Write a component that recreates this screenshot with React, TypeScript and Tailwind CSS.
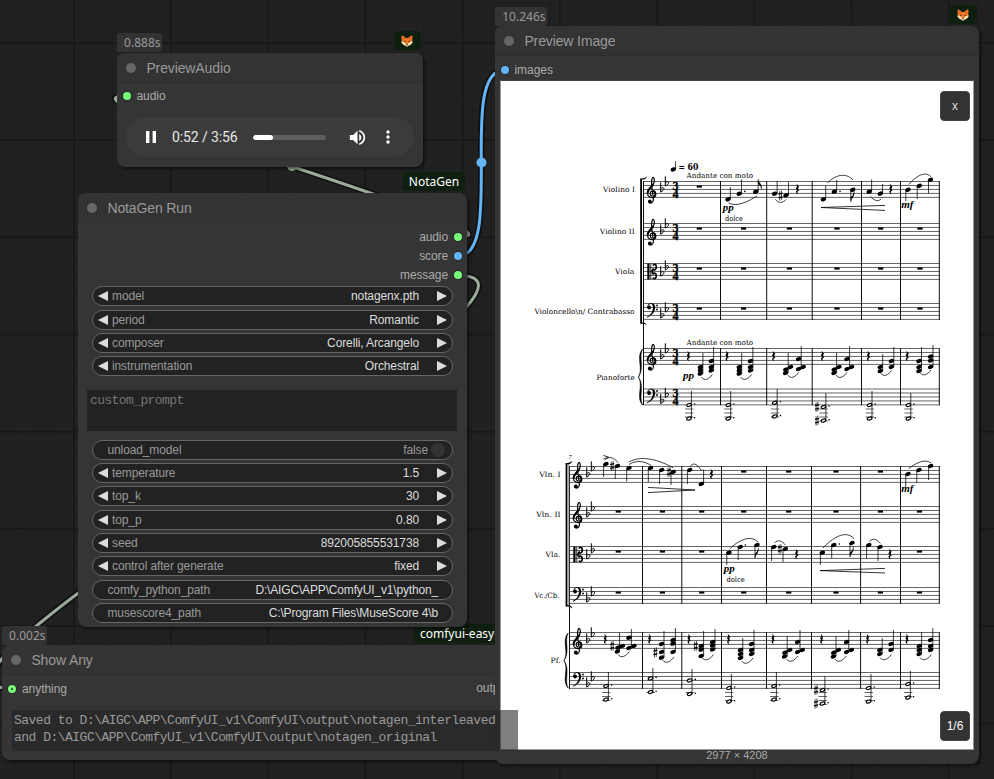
import React from "react";

const SANS = "font-['Liberation_Sans',Arial,sans-serif]";
const NOTO = "font-['Noto_Sans','Open_Sans',sans-serif]";

/* ---------- score engraving ---------- */

type Pt = [number, number];
type Chord = { h: Pt[]; s?: [number, number]; flag?: 1 | -1; dot?: Pt };

const staffLines = (x1: number, x2: number, top: number) =>
  [0, 1, 2, 3, 4].map((i) => (
    <line key={`${x1}-${top}-${i}`} x1={x1} x2={x2} y1={top + i * 3.97} y2={top + i * 3.97} stroke="#222" strokeWidth={0.7} />
  ));

const Treble = ({ x, y }: { x: number; y: number }) => (
  <g transform={`translate(${x} ${y + 12})`} fill="none" stroke="#000" strokeLinecap="round">
    <path
      strokeWidth="1.2"
      d="M4.8 2.4C2.7 1.4 3.2-2.2 5.8-2.6C9.6-2.8 10 3.4 6 4C1.4 4.4-.3.6 1.2-2.8C2.6-6 7.4-8.4 7.6-12.4C7.7-16.6 6.2-17.4 5.2-14C4-9.6 5.8-3 6.7 5C7.1 9.6 3.6 10.4 2.6 8.4"
    />
    <path strokeWidth="2" d="M.9-.6C1.2-4 4.2-6 6.2-8.6M7.6 3C9.4 1.4 9-1.4 7-2.2" />
    <circle cx="3.1" cy="8" r="1.9" fill="#000" stroke="none" />
  </g>
);

const Bass = ({ x, y }: { x: number; y: number }) => (
  <g transform={`translate(${x} ${y})`}>
    <circle cx="2.4" cy="4" r="1.9" />
    <path d="M.8 4C.4 1 2.600-.2 4.600-.2C7.600-.2 8.800 2 8.400 5C7.800 9.600 4 12.400.2 14.200L0 13.600C3.600 11.600 6 9 6.200 4.800C6.400 2 5.800.6 4.200.5C2.600.5 1.600 1.400 1.600 3Z" />
    <circle cx="10.3" cy="2" r=".9" />
    <circle cx="10.3" cy="6" r=".9" />
  </g>
);

const Alto = ({ x, y }: { x: number; y: number }) => (
  <g transform={`translate(${x + 0.6} ${y})`}>
    <rect width="2.2" height="16" />
    <rect x="3.1" width=".8" height="16" />
    <path
      fill="none"
      stroke="#000"
      strokeWidth="1.7"
      d="M5.6 2C6.4.2 9 .4 9 3.4C9 6.8 6.6 7 5.8 5.6L4.4 8L5.8 10.4C6.6 9 9 9.2 9 12.6C9 15.6 6.4 15.8 5.6 14"
    />
  </g>
);

const Flat = ({ x, y }: { x: number; y: number }) => (
  <path
    transform={`translate(${x} ${y})`}
    fill="none"
    stroke="#000"
    strokeWidth="1"
    d="M-1.4-7.200V2.600C.6 1.500 2.100.2 1.800-1.200C1.300-2.500-.4-1.800-1.400-.7"
  />
);

const Sharp = ({ x, y }: { x: number; y: number }) => (
  <g transform={`translate(${x} ${y})`} stroke="#000" fill="none">
    <path strokeWidth=".7" d="M-.9-4.4V5M.9-5V4.4" />
    <path strokeWidth="1.2" d="M-2-1.3L2-2.3M-2 2.3L2 1.3" />
  </g>
);

const QRest = ({ x, y }: { x: number; y: number }) => (
  <path
    transform={`translate(${x} ${y})`}
    d="M-1-5.6L1.6-2.2C.4-.8.6.4 2 2.2C.2 1.6-.8 2.8.8 5.4C-2 4.2-2 1.4 0 1.6L-1.6-.8C-.2-2-.2-3.6-1-5.6Z"
  />
);

const Head = ({ x, y, hollow }: { x: number; y: number; hollow?: boolean }) => (
  <ellipse
    cx={x}
    cy={y}
    rx={hollow ? 2.4 : 2.8}
    ry={hollow ? 1.4 : 2}
    transform={`rotate(-22 ${x} ${y})`}
    fill={hollow ? "#fff" : "#000"}
    stroke={hollow ? "#000" : "none"}
    strokeWidth={1.15}
  />
);

/* s = [stem x, stem end y] */
const ChordGlyph = ({ c }: { c: Chord }) => {
  const [first] = c.h;
  return (
    <g>
      {c.s && (
        <line
          x1={c.s[0]}
          x2={c.s[0]}
          y1={c.s[1] < first[1] ? Math.max(...c.h.map((p) => p[1])) : first[1]}
          y2={c.s[1]}
          stroke="#000"
          strokeWidth={0.75}
        />
      )}
      {c.h.map((p, i) => (
        <Head key={i} x={p[0]} y={p[1]} />
      ))}
      {c.flag === 1 && c.s && (
        <path d={`M${c.s[0]} ${c.s[1]}c.6 3.4 4.6 5 3.2 10.4c-.1-3.600-1.800-5.400-3.200-6Z`} stroke="#000" strokeWidth=".2" />
      )}
      {c.flag === -1 && c.s && (
        <path d={`M${c.s[0]} ${c.s[1]}c.6-3.400 4.600-5 3.200-10.400c-.1 3.600-1.800 5.400-3.200 6Z`} stroke="#000" strokeWidth=".2" />
      )}
      {c.dot && <circle cx={c.dot[0]} cy={c.dot[1]} r=".8" />}
    </g>
  );
};

/* a pair of dotted half notes below the bass staff */
const Octave = ({ x, y, top, sharp, bottom }: { x: number; y: number; top: number; sharp?: boolean; bottom: number }) => (
  <g>
    <line x1={x + 2.4} x2={x + 2.4} y1={y + 13.6} y2={top} stroke="#000" strokeWidth=".75" />
    {[4, 8, 12, 16].map((d) =>
      bottom + d <= y + 14.5 ? (
        <line key={d} x1={x - 4} x2={x + 4.4} y1={bottom + d} y2={bottom + d} stroke="#222" strokeWidth=".7" />
      ) : null
    )}
    <Head x={x} y={y} hollow />
    <Head x={x} y={y + 13.6} hollow />
    <circle cx={x + 5.6} cy={y - 1} r=".8" />
    <circle cx={x + 5.6} cy={y + 12.8} r=".8" />
    {sharp && <Sharp x={x - 6.5} y={y} />}
    {sharp && <Sharp x={x - 6.5} y={y + 13.6} />}
  </g>
);

const Slur = ({ a, b, k }: { a: Pt; b: Pt; k: number }) => {
  const dx = (b[0] - a[0]) * 0.28;
  return (
    <path
      fill="none"
      stroke="#000"
      strokeWidth=".75"
      d={`M${a[0]} ${a[1]}C${a[0] + dx} ${a[1] + k} ${b[0] - dx} ${b[1] + k} ${b[0]} ${b[1]}`}
    />
  );
};

const n = (x: number, y: number, sx: number, sy: number, extra: Partial<Chord> = {}): Chord => ({
  h: [[x, y]],
  s: [sx, sy],
  ...extra,
});
const c = (sx: number, sy: number, ...h: Pt[]): Chord => ({ h, s: [sx, sy] });

const chords: Chord[] = [
  n(673.4, 169.4, 675.6, 161),
  n(728, 199.3, 730.3, 187), n(739.3, 193.7, 741.5, 179.5, { dot: [744.8, 191.4] }), n(755.8, 191.7, 758.2, 179.5, { flag: 1 }),
  n(774.7, 193.7, 777.1, 181), n(786, 195.3, 788.5, 182),
  n(823.4, 199.3, 825.7, 186), n(834.4, 191.7, 836.7, 180, { dot: [840, 191.4] }), n(852.7, 189.8, 850.8, 201.5, { flag: -1 }),
  n(869.3, 191.7, 871.6, 179.5), n(880.4, 193.6, 882.6, 184),
  n(908, 189.8, 905.8, 201), n(919.3, 185.8, 917.2, 199), n(930.5, 179.8, 928.5, 193.5),
  c(702.9, 353, [700.4, 367], [700.4, 370.3], [700.4, 373.6]), c(713.6, 347, [711.3, 361], [711.3, 367], [711.3, 370.5]),
  c(741.7, 353, [739.3, 367], [739.3, 370.3], [739.3, 373.6]), c(752.9, 347, [750.5, 361], [750.5, 367], [750.5, 370.5]),
  c(788.2, 353, [785.8, 369.5], [790.6, 367], [785.6, 373]), c(801.2, 346, [798.6, 359], [798.6, 369], [803.2, 367]),
  c(836.6, 353, [834.2, 369.5], [839, 367], [834, 373]), c(849.6, 346, [847, 359], [847, 369], [851.6, 367]),
  c(882.7, 354, [880.3, 367], [880.3, 371]), c(893.8, 347, [891.4, 361], [891.4, 367]),
  c(921.5, 347, [919, 361], [919, 367], [919, 371]), c(933, 345, [930.6, 356.5], [930.6, 360.5], [930.6, 367]),
  n(606, 464, 603.6, 477), n(617.4, 466, 615.3, 479), n(629, 468, 626.7, 481.5),
  n(650.6, 468, 648.3, 482), n(661.7, 470, 659.5, 484), n(673.3, 472, 671, 485),
  n(689.7, 470, 687.4, 484), n(701.3, 484, 703.6, 469.5),
  n(908, 474, 905.7, 487), n(919, 470, 916.8, 483), n(930.6, 466, 928.6, 480),
  n(729, 552.7, 726.8, 565), n(740.3, 547, 738.2, 560, { dot: [745.3, 545] }), n(757, 545, 755, 558, { flag: -1 }),
  n(773.8, 547, 771.6, 561), n(785.3, 549, 783, 562),
  n(822.4, 552.7, 820.4, 565), n(833.8, 545, 831.7, 558, { dot: [839.2, 544] }), n(852, 543, 850, 557, { flag: -1 }),
  n(868.8, 545, 866.6, 558), n(880, 547, 878, 561),
  c(619.6, 633, [618, 647.5], [622.4, 646], [617.4, 651.5]), c(631.4, 629, [629, 637.7], [629, 648], [634, 646]),
  c(664, 631, [661.6, 644], [661.6, 652], [661.6, 657.6]), c(675.4, 628, [673, 640], [673, 643.6], [673, 652]),
  c(703.6, 631, [701.2, 646], [701.2, 649.6], [701.2, 656]), c(715, 629, [712.6, 642], [712.6, 645.4], [712.6, 649.5]),
  c(742.8, 638, [740.5, 650], [740.5, 654], [740.5, 658]), c(754, 630, [751.6, 644], [751.6, 650], [751.6, 654]),
  c(787.2, 636, [785, 652.6], [789.8, 650], [784.6, 656.5]), c(800, 630, [797.6, 642], [797.6, 652], [802.4, 650]),
  c(836, 636, [833.8, 652.6], [838.4, 650], [833.4, 656.5]), c(848.8, 630, [846.6, 642], [846.6, 652], [851.4, 650]),
  c(882.2, 638, [879.8, 650], [879.8, 654]), c(893.4, 630, [891, 644], [891, 650]),
  c(921.6, 632, [919.2, 646], [919.2, 650], [919.2, 654]), c(932.8, 628, [930.6, 640], [930.6, 646], [930.6, 650]),
];

const sharps: Pt[] = [[780.6, 195.5], [612.2, 466], [669, 472], [780, 549], [612.2, 646], [655.4, 652.4], [695.6, 646]];

const quarterRests: Pt[] = [
  [797.4, 189], [890.8, 189], [711.5, 474], [796.6, 554], [890, 554],
  [688.4, 356], [727, 356], [773.6, 356], [822.4, 356], [868.4, 356], [907.2, 356],
  [605.3, 639], [649.6, 639], [689, 639], [728.6, 639], [773, 639], [821.6, 639], [867.6, 639], [907, 639],
];

const octaves: [number, number, number, number, boolean?][] = [
  [689, 405, 391, 405], [728.3, 405, 391, 405], [774.8, 402.8, 389, 405], [823.5, 407, 393, 405, true], [869.6, 405, 391, 405], [908.4, 405, 393, 405],
  [606, 686, 672, 688.5], [650.5, 678.4, 668, 688.5], [689.6, 680.4, 669, 688.5], [729, 688, 674, 688.5],
  [774, 686, 672, 688.5], [822.5, 690, 676, 688.5, true], [868.6, 688, 674, 688.5], [908, 684, 671, 688.5],
];

const slurs: [Pt, Pt, number][] = [
  [[728.5, 202.8], [757, 196], 5], [[775.4, 199.4], [786, 199.4], 4], [[827.6, 183], [853, 180], -8],
  [[870.4, 196.5], [881, 199], 3.4], [[908.8, 184.4], [931, 176.8], -7],
  [[605, 460], [618, 462.5], -4.6], [[629, 464.5], [651, 465.5], -4.6], [[629, 462], [673.4, 468], -7.5],
  [[690.4, 466.4], [701.6, 471], -5.4], [[908.8, 468.6], [931, 463], -5],
  [[729.6, 549], [758, 542], -8], [[774.6, 543], [785.4, 545], -4], [[823, 548], [854, 538.6], -9.5], [[869.4, 541.5], [880.4, 543.4], -4],
  ...([[701.4, 377], [740.6, 377], [787.6, 375], [836, 375], [880.6, 373], [920, 372.5]] as Pt[]).map(
    (p): [Pt, Pt, number] => [p, [p[0] + 11, p[1] - 2.6], 4.6]
  ),
  ...([[618, 654.4], [662.6, 660], [702, 657.6], [741.6, 661], [786.4, 659], [834.8, 659], [880, 657.5], [920, 657.5]] as Pt[]).map(
    (p): [Pt, Pt, number] => [p, [p[0] + 11.4, p[1] - 3], 4.6]
  ),
];

const rests1 = [699.3, 743.6, 789.4, 837, 880.7, 920];
const rests2 = [618.3, 662.4, 701.7, 743.7, 788.7, 836, 880.4, 919.5];
const barRests: Pt[] = [
  [699.3, 185.5],
  ...[223.5, 263.5, 303.5].flatMap((y) => rests1.map((x): Pt => [x, y + 4])),
  ...rests2.slice(3, 7).map((x): Pt => [x, 470.5]),
  ...[506.5, 587.5].flatMap((y) => rests2.map((x): Pt => [x, y + 4])),
  ...[618.3, 662.4, 701.7, 919.5].map((x): Pt => [x, 550.5]),
];

const bars1 = [720.5, 766.7, 812.2, 861.5, 900.5, 939.3];
const bars2 = [642.5, 681.8, 721.5, 766.5, 811.5, 860.6, 900.5, 939.3];

const Label = ({ x, y, w, s = 7.3, children }: { x: number; y: number; w: number; s?: number; children: string }) => (
  <text x={x} y={y} textLength={w} lengthAdjust="spacingAndGlyphs" fontSize={s} className="font-['DejaVu_Serif',serif]">
    {children}
  </text>
);

const Dyn = ({ x, y, children }: { x: number; y: number; children: string }) => (
  <text x={x} y={y} textAnchor="middle" fontSize="11" className="font-['Liberation_Serif',serif] font-bold italic">
    {children}
  </text>
);

const Signature = ({ x, tops, time }: { x: number; tops: number[]; time?: boolean }) => (
  <>
    {tops.map((y, i) => {
      const kind = i === 2 ? "alto" : i === 3 || i === 5 ? "bass" : "treble";
      const off = kind === "alto" ? 10 : kind === "bass" ? 12 : 8;
      return (
        <g key={i}>
          {kind === "treble" && <Treble x={x} y={y} />}
          {kind === "alto" && <Alto x={x} y={y} />}
          {kind === "bass" && <Bass x={x} y={y} />}
          <Flat x={x + 15.4} y={y + off} />
          <Flat x={x + 20} y={y + off - 6} />
          {time &&
            ["3", "4"].map((d, k) => (
              <text
                key={d}
                x={x + 28.7}
                y={y + 8 + k * 8}
                textAnchor="middle"
                fontSize="12"
                stroke="#000"
                strokeWidth=".3"
                className="font-['Liberation_Serif',serif] font-bold"
              >
                {d}
              </text>
            ))}
        </g>
      );
    })}
  </>
);

const tops1 = [181.5, 223.5, 263.5, 303.5, 348.5, 389];
const tops2 = [466.5, 506.5, 546.5, 587.5, 632.5, 672.5];

const Score = () => (
  <svg viewBox="501 81 472 668" className="block h-[668px] w-[472px] bg-white" fill="#000">
    {tops1.map((y) => staffLines(643.2, 939.6, y))}
    {tops2.map((y) => staffLines(569.2, 939.6, y))}
    <g stroke="#000" strokeWidth=".95">
      <line x1="643.5" x2="643.5" y1="181" y2="405" />
      <line x1="569.5" x2="569.5" y1="466" y2="689" />
      {bars1.map((x) => (
        <g key={x}>
          <line x1={x} x2={x} y1="181" y2="320" />
          <line x1={x} x2={x} y1="348.2" y2="405.2" />
        </g>
      ))}
      {bars2.map((x) => (
        <g key={x}>
          <line x1={x} x2={x} y1="466" y2="603.8" />
          <line x1={x} x2={x} y1="632.2" y2="689" />
        </g>
      ))}
    </g>
    <path d="M640.2 178.4C643 178.6 645 178 647.2 176.2C646 179 644 179.6 642 179.6V322.4C644 322.4 646 323 647.2 325.2C645 323.8 643 323.6 640.2 323.8Z" />
    <rect x="567" y="464" width="2.2" height="141.500" fill="#aaa" />
    <path d="M565.6 463C568.4 463 570.6 462.4 572.6 460.4C571.4 463.6 569.6 464.2 567.1 464.4V605C569.6 605 571.4 606 572.8 608.4C570.6 606.6 568.4 606.4 565.6 606.4Z" />
    <path d="M642.6 349C635.6 356 643.6 369 638.4 377C643.6 385 635.6 398 642.6 405C638.4 397 644.8 386 638.6 377C644.8 368 638.4 357 642.6 349Z" stroke="#000" strokeWidth=".5" />
    <path d="M568.2 633C561.2 640 569.2 652 564 660.5C569.2 669 561.2 681 568.2 688C564 681 570.4 670 564.2 660.5C570.4 651 564 641 568.2 633Z" stroke="#000" strokeWidth=".5" />

    <Signature x={646.7} tops={tops1} time />
    <Signature x={572.7} tops={tops2} />

    {barRests.map(([x, y]) => (
      <rect key={`${x}-${y}`} x={x - 2.6} y={y} width="5.2" height="2.1" />
    ))}
    {quarterRests.map(([x, y]) => (
      <QRest key={`${x}-${y}`} x={x} y={y} />
    ))}
    {octaves.map(([x, y, top, bottom, sharp]) => (
      <Octave key={`${x}-${y}`} x={x} y={y} top={top} bottom={bottom} sharp={sharp} />
    ))}
    {sharps.map(([x, y]) => (
      <Sharp key={`${x}-${y}`} x={x} y={y} />
    ))}
    {chords.map((ch, i) => (
      <ChordGlyph key={i} c={ch} />
    ))}
    {slurs.map(([a, b, k], i) => (
      <Slur key={i} a={a} b={b} k={k} />
    ))}
    <path
      fill="none"
      stroke="#000"
      strokeWidth=".8"
      d="M885 205.4L821 207.5L885 210.4M648 487.4L695 490L648 492.6M885 568.4L820 570.6L885 573M603.4 455.4L608.6 457.2L603.4 459"
    />

    <text x="678.4" y="169.8" textLength="20" lengthAdjust="spacingAndGlyphs" fontSize="8.500" className="font-['DejaVu_Serif',serif] font-bold">
      = 60
    </text>
    <Label x={686.6} y={177.6} w={66.6}>Andante con moto</Label>
    <Label x={686.6} y={344.8} w={66.6}>Andante con moto</Label>
    <Label x={603} y={192.4} w={32}>Violino I</Label>
    <Label x={599.8} y={234} w={35}>Violino II</Label>
    <Label x={615} y={274} w={19.4}>Viola</Label>
    <Label x={534.4} y={314.4} w={100}>{"Violoncello\\n/ Contrabasso"}</Label>
    <Label x={596.4} y={379.8} w={38.4}>Pianoforte</Label>
    <Label x={539.2} y={476.8} w={21.4}>Vln. I</Label>
    <Label x={536.2} y={517} w={24.4}>Vln. II</Label>
    <Label x={545.6} y={557.4} w={14.8}>Vla.</Label>
    <Label x={534.4} y={597.8} w={25}>Vc./Cb.</Label>
    <Label x={550.6} y={662.6} w={10}>Pf.</Label>
    <Label x={725} y={220.8} w={18}>dolce</Label>
    <Label x={726.4} y={581.8} w={18.4}>dolce</Label>
    <text x="568.6" y="458.6" fontSize="6" className="font-['Liberation_Serif',serif] italic">7</text>
    <Dyn x={728.2} y={211}>pp</Dyn>
    <Dyn x={688.6} y={379}>pp</Dyn>
    <Dyn x={729.2} y={572}>pp</Dyn>
    <Dyn x={907.4} y={208}>mf</Dyn>
    <Dyn x={907.4} y={492}>mf</Dyn>
  </svg>
);

/* ---------- node graph ---------- */

const Fox = () => (
  <svg viewBox="0 0 24 24" className="h-3 w-3">
    <path fill="#f4792b" d="M1.5 1C5 1.5 8 4 9.5 6h5C16 4 19 1.500 22.500 1C23.500 6 22.500 10 22 13L12 23L2 13C1.500 10 .5 6 1.500 1Z" />
    <path fill="#d9571f" d="M3.500 3.500C6 5 7 6.500 7.500 7.500L4 10ZM20.500 3.500C18 5 17 6.500 16.500 7.500L20 10Z" />
    <path fill="#ffe3b0" d="M0 13C4 12 8 14.500 10 18h4C16 14.500 20 12 24 13C22 18 18 20.500 15 21.500L12 23.500L9 21.500C6 20.500 2 18 0 13Z" />
    <circle cx="8" cy="12.500" r="1.500" fill="#4a2413" />
    <circle cx="16" cy="12.500" r="1.500" fill="#4a2413" />
    <path fill="#3b2a22" d="M9.500 18.500h5L12 21.500Z" />
  </svg>
);

const TimeTag = ({ className, children }: { className: string; children: string }) => (
  <div className={`absolute flex h-[19px] items-center justify-end rounded-t-[3px] rounded-br-[3px] bg-[#333] pr-[1.500px] text-[12px] text-[#999] ${NOTO} ${className}`}>
    {children}
  </div>
);

const Badge = ({ className, children }: { className: string; children: React.ReactNode }) => (
  <div className={`absolute flex h-[19px] items-center justify-center rounded bg-[#0f1f0f] text-[12px] whitespace-nowrap text-white ${NOTO} ${className}`}>
    {children}
  </div>
);

const Node = ({ className, title, children }: { className: string; title: string; children: React.ReactNode }) => (
  <section className={`absolute flex flex-col rounded-lg bg-[#353535] shadow-[2px_2px_3px_rgba(0,0,0,0.5)] ${className}`}>
    <header className="flex h-[30px] shrink-0 items-center gap-[10px] rounded-t-lg border-b border-[#2e2e2e] bg-[#333] pl-[9.400px] text-[14px] tracking-[-0.120px] text-[#999]">
      <span className="h-[10px] w-[10px] rounded-full bg-[#666]" />
      <h2 className="pt-px">{title}</h2>
    </header>
    {children}
  </section>
);

const dotColors = {
  green: "bg-[#77ff77]",
  blue: "bg-[#64b5f6]",
  ring: "border-[3px] border-[#77ff77] bg-[#222]",
};
const Dot = ({ kind }: { kind: keyof typeof dotColors }) => (
  <span className={`h-2 w-2 shrink-0 rounded-full ring-1 ring-[#222]/60 ${dotColors[kind]}`} />
);

const Input = ({ name, kind, className }: { name: string; kind: keyof typeof dotColors; className: string }) => (
  <div className={`flex h-[19px] items-center gap-[6px] text-[12px] tracking-[-0.050px] text-[#aaa] ${className}`}>
    <Dot kind={kind} />
    {name}
  </div>
);

const Arrow = ({ dir }: { dir: "l" | "r" }) => (
  <svg viewBox="0 0 10 10" className="h-[10px] w-[10px] shrink-0" fill="#ddd">
    <path d={dir === "l" ? "M10 0V10L0 5Z" : "M0 0V10L10 5Z"} />
  </svg>
);

const pill = "flex h-5 items-center rounded-full border border-[#666] bg-[#222] text-[12px] text-[#999]";

const Stepper = ({ name, value }: { name: string; value: string }) => (
  <div className={`${pill} pr-[5px] pl-[5px] tracking-[-0.120px]`}>
    <Arrow dir="l" />
    <span className="ml-1 grow">{name}</span>
    <span className="mr-[18px] text-[#ddd]">{value}</span>
    <Arrow dir="r" />
  </div>
);

const TextField = ({ name, value }: { name: string; value: string }) => (
  <div className={`${pill} justify-between pr-[14px] pl-[14.500px] tracking-[-0.130px]`}>
    <span>{name}</span>
    <span className="tracking-[-0.160px] text-[#ddd]">{value}</span>
  </div>
);

const Link = ({ d, color }: { d: string; color: string }) => (
  <g fill="none">
    <path d={d} stroke="#000" strokeOpacity=".5" strokeWidth="6.5" />
    <path d={d} stroke={color} strokeWidth="3" />
  </g>
);

const AudioPlayer = () => (
  <div className="mx-[9px] mt-[12px] flex h-10 items-center rounded-full bg-[#3b3b3b] pr-[24px] pl-5">
    <svg viewBox="0 0 10 12" className="h-3 w-[10px]" fill="#fff">
      <path d="M0 0H3.400V12H0ZM6.600 0H10V12H6.600Z" />
    </svg>
    <span className="ml-4 text-[14px] tracking-[-0.100px] text-[#e8e8e8] font-['Roboto',sans-serif]">0:52 / 3:56</span>
    <div className="ml-auto h-[5px] w-[73px] overflow-hidden rounded-full bg-[#5f5f5f]">
      <div className="h-full w-5 rounded-full bg-white" />
    </div>
    <svg viewBox="2 2 20 20" className="ml-[23px] h-[17px] w-[17px]" fill="#fff">
      <path d="M3 9v6h4l5 5V4L7 9H3zm13.500 3c0-1.770-1.020-3.290-2.500-4.030v8.050c1.480-.730 2.500-2.250 2.500-4.020zM14 3.230v2.060c2.890.860 5 3.540 5 6.710s-2.110 5.850-5 6.710v2.060c4.010-.910 7-4.490 7-8.770s-2.990-7.860-7-8.770z" />
    </svg>
    <svg viewBox="0 0 4 14" className="ml-5 h-[14px] w-1" fill="#fff">
      <circle cx="2" cy="2" r="1.700" />
      <circle cx="2" cy="7" r="1.700" />
      <circle cx="2" cy="12" r="1.700" />
    </svg>
  </div>
);

export default function App() {
  return (
    <main className={`relative h-[779px] w-[994px] overflow-hidden bg-[#212121] ${SANS}`}>
      <div className="absolute inset-0 bg-[linear-gradient(90deg,#1d1d1d_1px,transparent_1px),linear-gradient(#1d1d1d_1px,transparent_1px)] bg-[size:9.72px_9.72px] bg-[position:5.200px_3.400px]" />
      <div className="absolute inset-0 bg-[linear-gradient(90deg,#191919_1.500px,transparent_1.500px),linear-gradient(#191919_1.500px,transparent_1.500px)] bg-[size:97.2px_97.2px] bg-[position:73px_42px]" />

      <svg viewBox="0 0 994 779" className="absolute inset-0 h-full w-full">
        <Link color="#9aab9a" d="M458 237C548 237 36 96 126 96" />
        <circle cx="292" cy="166" r="5" fill="#9aab9a" />
        <Link color="#9aab9a" d="M458 275.500C610 275.500-140 688.500 11.700 688.500" />
        <Link color="#64b5f6" d="M458 256C506 256 456.500 70 504.500 70" />
        <circle cx="481.500" cy="162.500" r="5" fill="#64b5f6" />
      </svg>

      <TimeTag className="top-[33px] left-[117px] w-[45px]">0.888s</TimeTag>
      <Badge className="top-[31px] left-[393.500px] w-[27.500px]"><Fox /></Badge>
      <Node className="top-[53px] left-[117px] h-[114px] w-[306px]" title="PreviewAudio">
        <Input name="audio" kind="green" className="mt-[3px] pl-[5.500px]" />
        <AudioPlayer />
      </Node>

      <Badge className="top-[624px] left-[414px] w-[110px] !justify-start pl-[6px]">comfyui-easy-use</Badge>
      <Badge className="top-[172px] left-[403px] w-[62px]">NotaGen</Badge>
      <Node className="top-[193px] left-[78px] h-[434px] w-[389px]" title="NotaGen Run">
        <div className="mt-[4px] flex flex-col items-end pr-[5px] text-[12px] text-[#aaa]">
          {(["audio", "score", "message"] as const).map((o) => (
            <div key={o} className="flex h-[19.400px] items-center gap-[6px] tracking-[-0.100px]">
              {o}
              <Dot kind={o === "score" ? "blue" : "green"} />
            </div>
          ))}
        </div>
        <div className="mx-[14px] mt-[1px] flex flex-col gap-[3.350px]">
          <Stepper name="model" value="notagenx.pth" />
          <Stepper name="period" value="Romantic" />
          <Stepper name="composer" value="Corelli, Arcangelo" />
          <Stepper name="instrumentation" value="Orchestral" />
        </div>
        <div className="mr-[10px] ml-[9px] mt-[14px] h-[41px] shrink-0 bg-[#222] px-[3px] pt-[3px] text-[13px] leading-4 tracking-[-0.600px] text-[#757575] font-['Liberation_Mono',monospace]">
          custom_prompt
        </div>
        <div className="mx-[14px] mt-[8.500px] flex flex-col gap-[3.350px]">
          <div className={`${pill} pr-[7px] pl-[14.500px] tracking-[-0.120px]`}>
            <span className="grow">unload_model</span>
            <span>false</span>
            <span className="ml-[3px] h-[14px] w-[14px] rounded-full bg-[#333]" />
          </div>
          <Stepper name="temperature" value="1.5" />
          <Stepper name="top_k" value="30" />
          <Stepper name="top_p" value="0.80" />
          <Stepper name="seed" value="892005855531738" />
          <Stepper name="control after generate" value="fixed" />
          <TextField name="comfy_python_path" value="D:\AIGC\APP\ComfyUI_v1\python_" />
          <TextField name="musescore4_path" value="C:\Program Files\MuseScore 4\b" />
        </div>
      </Node>

      <TimeTag className="top-[626px] left-[2px] w-[45px]">0.002s</TimeTag>
      <Node className="top-[645px] left-[2px] h-[115px] w-[525px]" title="Show Any">
        <div className="mt-[4px] flex justify-between pr-[17.500px]">
          <Input name="anything" kind="ring" className="pl-[6px]" />
          <span className="text-[12px] leading-[19px] text-[#aaa]">output</span>
        </div>
      </Node>

      <TimeTag className="top-[7px] left-[495px] w-[52px]">10.246s</TimeTag>
      <Badge className="top-[5px] left-[949.500px] w-[27.500px]"><Fox /></Badge>
      <Node className="top-[26px] left-[495px] h-[738px] w-[484px]" title="Preview Image">
        <Input name="images" kind="blue" className="mt-[4px] pl-[5.500px]" />
        <div className="relative mx-[5px] mt-[1px] border border-[#999] border-t-[#444]">
          <Score />
          <button className="absolute top-[10px] right-[3px] h-[30px] w-[30px] rounded border border-[#444] bg-[#333] text-[12px] text-[#ddd]">x</button>
          <button className="absolute right-[3px] bottom-[8px] h-[30px] w-[30px] rounded border border-[#444] bg-[#333] text-[12px] text-white">1/6</button>
        </div>
        <p className="-mt-px text-center text-[11px] leading-[12px] text-[#aaa]">2977 × 4208</p>
      </Node>

      <div className="absolute top-[710px] left-[12px] h-[41px] w-[506px] bg-[#222]/58 px-[2px] pt-[2px] text-[13px] leading-[17px] tracking-[-0.510px] whitespace-pre text-[#999] font-['Liberation_Mono',monospace]">
        {"Saved to D:\\AIGC\\APP\\ComfyUI_v1\\ComfyUI\\output\\notagen_interleaved\nand D:\\AIGC\\APP\\ComfyUI_v1\\ComfyUI\\output\\notagen_original"}
      </div>
    </main>
  );
}
